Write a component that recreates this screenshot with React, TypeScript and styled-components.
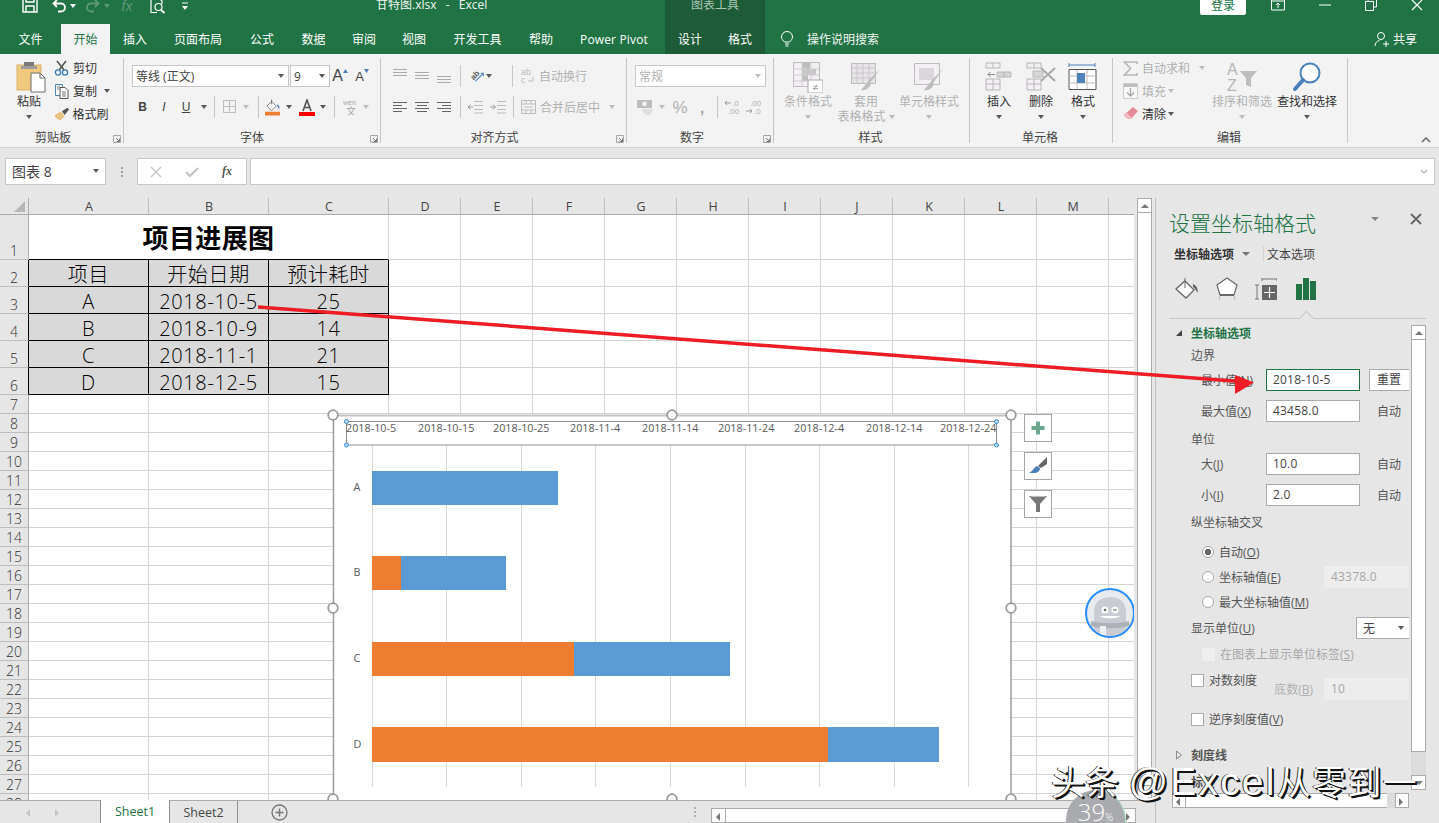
import React from "react";
import styled, { createGlobalStyle } from "styled-components";

const FONT = `"Open Sans","Noto Sans CJK SC",sans-serif`;
const GREEN = "#217346";

const Global = createGlobalStyle`
  html,body{margin:0;padding:0;overflow:hidden;background:#e6e6e6;}
  *{box-sizing:border-box;}
  #root{width:1439px;height:823px;}
`;

const Page = styled.div`
  position:relative;width:1439px;height:823px;overflow:hidden;display:flex;flex-direction:column;
  font-family:${FONT};font-size:12px;color:#444;background:#e6e6e6;
`;

/* shared slots */
const Slot = styled.span<{ $w: number; $ml?: number }>`
  display:inline-flex;align-items:center;justify-content:center;flex:none;
  width:${p => p.$w}px;margin-left:${p => p.$ml ?? 0}px;
`;
const Caret = styled.i<{ $dim?: boolean; $c?: string }>`
  display:block;width:0;height:0;border-left:3.5px solid transparent;border-right:3.5px solid transparent;
  border-top:4px solid ${p => p.$c ?? (p.$dim ? "#bdbdbd" : "#595959")};
`;

/* title bar */
const TitleBar = styled.div`
  display:flex;height:24px;background:${GREEN};color:#fff;align-items:flex-start;flex:none;
`;
const TitleIconSlot = styled(Slot)`height:14px;margin-top:-1px;overflow:visible;`;
const TitleText = styled.div`
  flex:none;width:289px;margin-left:187px;line-height:12px;margin-top:-1px;white-space:pre;font-size:12px;color:#f2f7f4;word-spacing:1.5px;
`;
const ContextHead = styled.div`
  flex:none;width:100px;height:24px;background:#1e5c39;text-align:center;line-height:12px;color:#a9c7b6;
  & > span{position:relative;top:-1px;}
`;
const Login = styled.div`
  flex:none;width:46px;height:15px;margin-left:435px;background:#fff;color:${GREEN};text-align:center;line-height:11px;border-radius:0 0 2px 2px;
`;
const WinBtn = styled(Slot)`height:12px;margin-top:-1px;`;

/* tabs */
const TabBar = styled.div`
  display:flex;height:30px;background:${GREEN};flex:none;color:#fff;align-items:stretch;
`;
const Tab = styled.div<{ $w: number; $active?: boolean; $ctx?: boolean; $ls?: number }>`
  flex:none;width:${p => p.$w}px;display:flex;align-items:center;justify-content:center;font-size:12px;
  letter-spacing:${p => p.$ls ?? 0}px;
  background:${p => (p.$active ? "#f3f3f3" : p.$ctx ? "#1e5c39" : "transparent")};
  color:${p => (p.$active ? GREEN : "#fff")};
`;
const TabGap = styled.div<{ $w: number }>`flex:none;width:${p => p.$w}px;`;
const SearchHint = styled.div`display:flex;align-items:center;margin-left:15px;color:#f0f6f2;`;
const ShareBox = styled.div`display:flex;align-items:center;margin-left:auto;margin-right:22px;gap:3px;`;

/* ribbon */
const Ribbon = styled.div`
  position:relative;display:flex;height:94px;background:#f3f3f3;border-bottom:1px solid #d2d2d2;flex:none;padding-top:4px;
`;
const Group = styled.div<{ $w: number }>`
  position:relative;flex:none;width:${p => p.$w}px;height:85px;border-right:1px solid #c6c6c6;display:flex;flex-direction:column;
`;
const GroupBody = styled.div`flex:1;display:flex;min-height:0;`;
const GroupLabel = styled.div<{ $pr?: number }>`
  flex:none;height:14px;line-height:14px;text-align:center;color:#444;font-size:12px;
  padding-right:${p => p.$pr ?? 0}px;position:relative;top:1.5px;
`;
const Launcher = styled.svg`position:absolute;right:2px;bottom:0;width:8px;height:8px;`;
const BigBtn = styled.div<{ $w: number; $ml?: number; $dim?: boolean }>`
  flex:none;width:${p => p.$w}px;margin-left:${p => p.$ml ?? 0}px;padding-top:4px;display:flex;flex-direction:column;align-items:center;
  color:${p => (p.$dim ? "#b1b1b1" : "#333")};white-space:nowrap;
`;
const BigIcon = styled.div<{ $lead?: number }>`
  height:30px;width:32px;flex:none;margin-bottom:2px;margin-left:${p => p.$lead ?? 0}px;display:flex;align-items:center;justify-content:center;
`;
const BigText = styled.div`height:15px;line-height:15px;display:flex;align-items:center;gap:3px;`;
const BigCaret = styled.div`height:15px;display:flex;align-items:center;`;
const SmallCol = styled.div<{ $ml: number; $w?: number }>`
  flex:none;margin-left:${p => p.$ml}px;${p => (p.$w ? `width:${p.$w}px;` : "")}display:flex;flex-direction:column;gap:3px;
`;
const SmallRow = styled.div<{ $dim?: boolean }>`
  height:20px;display:flex;align-items:center;white-space:nowrap;color:${p => (p.$dim ? "#b1b1b1" : "#333")};
`;
const Stack = styled.div`flex:none;display:flex;flex-direction:column;gap:9px;padding-top:7px;`;
const ToolRow = styled.div`display:flex;align-items:center;height:22px;white-space:nowrap;`;
const Combo = styled.div<{ $w: number; $ml?: number; $dim?: boolean }>`
  flex:none;width:${p => p.$w}px;height:22px;margin-left:${p => p.$ml ?? 0}px;background:#fff;border:1px solid #c6c6c6;
  display:flex;align-items:center;justify-content:space-between;padding:0 4px 0 3px;color:${p => (p.$dim ? "#b1b1b1" : "#444")};
`;
const RSep = styled.i<{ $ml?: number }>`
  display:block;flex:none;width:1px;height:22px;background:#c6c6c6;margin-left:${p => p.$ml ?? 0}px;
`;
const Dim = styled.span<{ $ml?: number }>`color:#b1b1b1;flex:none;margin-left:${p => p.$ml ?? 0}px;`;
const FontLetter = styled.span<{ $b?: boolean; $i?: boolean; $u?: boolean; $size?: number; $c?: string }>`
  font-family:"Liberation Sans",sans-serif;font-size:${p => p.$size ?? 12}px;line-height:1;color:${p => p.$c ?? "#444"};
  font-weight:${p => (p.$b ? 700 : 400)};font-style:${p => (p.$i ? "italic" : "normal")};
  text-decoration:${p => (p.$u ? "underline" : "none")};
`;
const Collapse = styled.svg`position:absolute;right:8px;bottom:4px;width:10px;height:6px;`;

/* formula bar */
const FormulaBar = styled.div`
  flex:none;height:42px;padding-top:10px;display:flex;background:#e6e6e6;align-items:flex-start;
`;
const NameBox = styled.div`
  flex:none;width:101px;height:27px;margin-left:5px;background:#fff;border:1px solid #c6c6c6;display:flex;align-items:center;justify-content:space-between;padding:0 6px 2px;font-size:14px;color:#444;
`;
const Grip = styled.svg`flex:none;width:4px;height:12px;margin:8px 13px 0 14px;`;
const FxBox = styled.div`
  flex:none;width:110px;height:27px;background:#fff;border:1px solid #c6c6c6;display:flex;align-items:center;
`;
const FormulaInput = styled.div`
  flex:none;width:1185px;height:27px;margin-left:3px;background:#fff;border:1px solid #c6c6c6;display:flex;align-items:center;justify-content:flex-end;padding-right:6px;
`;
const FxText = styled.span`font:italic 700 12px "Liberation Serif",serif;color:#555;`;

/* main */
const Main = styled.div`flex:1;display:flex;min-height:0;`;
const LeftCol = styled.div`flex:none;width:1155px;display:flex;flex-direction:column;padding-top:8px;`;
const SheetRow = styled.div`flex:1;display:flex;min-height:0;`;
const Sheet = styled.div`position:relative;flex:none;width:1134px;overflow:hidden;background:#fff;`;
const Grid = styled.div`
  display:grid;
  grid-template-columns:29px 120px 120px 120px repeat(10,72px) 26px;
  grid-template-rows:17px 45px repeat(5,27px) repeat(22,19px);
`;
const Corner = styled.div`background:#e6e6e6;border-right:1px solid #ababab;border-bottom:1px solid #ababab;position:relative;
  &::after{content:"";position:absolute;right:3px;bottom:2px;border-style:solid;border-width:0 0 11px 11px;border-color:transparent transparent #b7b7b7 transparent;}
`;
const ColHead = styled.div`
  background:#e6e6e6;border-right:1px solid #bdbdbd;border-bottom:1px solid #ababab;display:flex;align-items:center;justify-content:center;font-size:12.5px;color:#444;line-height:1;padding:2px 0 0 1px;
`;
const RowHead = styled.div<{ $dark?: boolean }>`
  background:#e6e6e6;border-right:1px solid ${p => (p.$dark ? "#000" : "#ababab")};border-bottom:1px solid #bdbdbd;display:flex;align-items:flex-end;justify-content:center;font-size:14px;line-height:17px;color:#333;font-weight:300;
`;
const Cell = styled.div<{ $r?: boolean; $b?: boolean; $fill?: boolean }>`
  background:${p => (p.$fill ? "#d9d9d9" : "#fff")};
  border-right:1px solid ${p => (p.$r ? "#000" : "#d4d4d4")};
  border-bottom:1px solid ${p => (p.$b ? "#000" : "#d4d4d4")};
  display:flex;align-items:center;justify-content:center;font-size:20px;font-weight:300;line-height:1;color:#000;padding-top:4px;letter-spacing:.65px;
`;
const TitleCell = styled(Cell)`grid-column:span 3;font-size:26px;font-weight:700;color:#000;letter-spacing:.4px;padding-top:2px;`;

const ChartSvg = styled.svg`position:absolute;left:325px;top:207px;width:700px;height:410px;overflow:visible;`;
const ChartTools = styled.div`position:absolute;left:1024px;top:216px;display:flex;flex-direction:column;gap:10px;`;
const ChartTool = styled.div`width:28px;height:28px;background:#fff;border:1px solid #a6a6a6;display:flex;align-items:center;justify-content:center;`;
const Mascot = styled.div`
  position:absolute;left:1085px;top:390px;width:50px;height:50px;border-radius:50%;border:2px solid #2a8cff;background:#e8eaee;overflow:hidden;
`;

const VScroll = styled.div`
  flex:none;width:15px;margin-left:3px;background:#fff;border:1px solid #ababab;display:flex;flex-direction:column;justify-content:space-between;
`;
const ScrollBtn = styled.div<{ $w?: number; $h?: number; $ml?: number }>`
  flex:none;${p => (p.$w ? `width:${p.$w}px;` : "")}height:${p => p.$h ?? 15}px;margin-left:${p => p.$ml ?? 0}px;background:#fff;border:1px solid #ababab;display:flex;align-items:center;justify-content:center;
`;
const VScrollBtn = styled(ScrollBtn)`margin:-1px;width:15px;`;

/* sheet tabs */
const SheetTabs = styled.div`
  flex:none;height:23px;border-top:1px solid #ababab;display:flex;align-items:stretch;background:#e6e6e6;
`;
const SheetTab = styled.div<{ $active?: boolean; $w: number; $ml?: number }>`
  flex:none;width:${p => p.$w}px;margin-left:${p => p.$ml ?? 0}px;display:flex;align-items:center;justify-content:center;
  background:${p => (p.$active ? "#fff" : "transparent")};color:${p => (p.$active ? GREEN : "#444")};
  border-right:1px solid #8f8f8f;${p => (p.$active ? "border-left:1px solid #8f8f8f;margin-top:-1px;" : "")}
  font-size:12.5px;
`;
const HScrollMain = styled.div`flex:none;display:flex;margin:7px 0 0 14px;height:15px;`;
const ScrollThumb = styled.div<{ $w: number }>`flex:none;width:${p => p.$w}px;background:#fff;border-top:1px solid #ababab;border-bottom:1px solid #ababab;`;

/* panel */
const Panel = styled.div`
  flex:none;width:284px;margin-top:8px;border-left:1px solid #bdbdbd;background:#e6e6e6;display:flex;flex-direction:column;
`;
const PanelTitleRow = styled.div`display:flex;align-items:flex-start;height:24px;margin-top:14px;flex:none;`;
const PanelTitle = styled.div`flex:none;margin-left:13px;width:147px;font-size:21px;line-height:24px;color:${GREEN};white-space:nowrap;font-weight:300;position:relative;top:-1px;`;
const PanelAction = styled(Slot)`height:12px;margin-top:1px;`;
const PanelTabs = styled.div`display:flex;align-items:center;height:16px;margin-top:10px;flex:none;`;
const PanelTabBold = styled.div`flex:none;margin-left:18px;font-weight:700;color:#333;`;
const PanelSep = styled.i`display:block;flex:none;width:1px;height:16px;background:#d4d4d4;margin-left:12px;`;
const PanelTab = styled.div`flex:none;margin-left:3px;color:#444;`;
const PanelIcons = styled.div`display:flex;align-items:center;height:26px;margin-top:14px;flex:none;`;
const Divider = styled.div`
  position:relative;flex:none;margin:16px 0 0 13px;width:257px;height:1px;background:#c6c6c6;
  &::after{content:"";position:absolute;left:132px;top:-5px;width:10px;height:10px;background:#e6e6e6;border-left:1px solid #c6c6c6;border-top:1px solid #c6c6c6;transform:rotate(45deg);}
`;
const PanelBody = styled.div`flex:none;height:468px;margin-top:3px;display:flex;`;
const PanelContent = styled.div`flex:none;width:253px;overflow:hidden;display:flex;flex-direction:column;`;
const PRow = styled.div<{ $mt?: number; $pl: number; $dim?: boolean; $b?: boolean; $c?: string }>`
  flex:none;height:22px;margin-top:${p => p.$mt ?? 0}px;padding-left:${p => p.$pl}px;display:flex;align-items:center;white-space:nowrap;
  color:${p => p.$c ?? (p.$dim ? "#a6a6a6" : "#555")};font-weight:${p => (p.$b ? 700 : 400)};
`;
const PLabel = styled.div<{ $w?: number }>`flex:none;${p => (p.$w ? `width:${p.$w}px;` : "")}`;
const PInput = styled.div<{ $w?: number; $active?: boolean; $ml?: number; $off?: boolean }>`
  flex:none;width:${p => p.$w ?? 94}px;height:22px;margin-left:${p => p.$ml ?? 0}px;line-height:20px;padding-left:6px;letter-spacing:.2px;
  background:${p => (p.$off ? "#ededed" : "#fff")};color:${p => (p.$off ? "#a6a6a6" : "#444")};
  border:1px solid ${p => (p.$active ? GREEN : p.$off ? "#ededed" : "#ababab")};
`;
const PButton = styled.div`
  flex:none;width:42px;height:22px;margin-left:9px;background:#fff;border:1px solid #ababab;line-height:20px;text-align:center;padding-right:2px;color:#444;
`;
const PAuto = styled.div`flex:none;width:42px;margin-left:9px;text-align:center;padding-right:2px;color:#555;`;
const Radio = styled.i<{ $on?: boolean }>`
  display:block;flex:none;width:12px;height:12px;border-radius:50%;border:1px solid #ababab;background:${p => (p.$on ? "radial-gradient(circle,#666 0 3px,#fff 3.5px)" : "#fff")};margin-right:5px;
`;
const Check = styled.i<{ $off?: boolean }>`
  display:block;flex:none;width:13px;height:13px;border:1px solid ${p => (p.$off ? "#efefef" : "#ababab")};background:${p => (p.$off ? "#efefef" : "#fff")};margin-right:5px;
`;
const PSelect = styled.div`
  flex:none;width:53px;height:22px;margin-left:auto;background:#fff;border:1px solid #ababab;border-right:none;display:flex;align-items:center;justify-content:space-between;padding:0 5px 0 6px;color:#444;
`;
const RightGroup = styled.div<{ $mt?: number }>`flex:none;margin-left:auto;display:flex;align-items:center;margin-top:${p => p.$mt ?? 0}px;`;
const Tri = styled.svg`flex:none;width:8px;height:10px;margin-right:8px;`;
const InnerScroll = styled.div`
  flex:none;width:15px;margin:3px 0 0 2px;height:465px;display:flex;flex-direction:column;
`;
const InnerThumb = styled.div`flex:none;height:412px;background:#fff;border:1px solid #ababab;border-top:none;`;
const InnerTrack = styled.div`flex:1;background:#dcdcdc;`;
const PanelHScroll = styled.div`flex:none;display:flex;margin:3px 0 0 16px;height:15px;width:237px;`;
const HTrack = styled.div`flex:none;width:8px;background:#dcdcdc;`;

/* overlays */
const ArrowSvg = styled.svg`position:absolute;left:0;top:0;width:1439px;height:823px;pointer-events:none;`;
const Watermark = styled.div`
  position:absolute;left:1051px;top:758px;font-size:34px;line-height:48px;color:#fff;white-space:pre;pointer-events:none;
  font-family:"Liberation Sans","Noto Sans CJK SC",sans-serif;text-shadow:2px 2px 0 #111,1px 1px 0 #111,-1px 0 0 #333;
`;
const WatermarkLatin = styled.span`font-size:39px;letter-spacing:2.2px;`;
const WatermarkTail = styled.span`letter-spacing:1.3px;`;
const Progress = styled.div`
  position:absolute;left:1066px;top:790px;width:60px;height:60px;border-radius:50%;background:#a9abae;border-right:1.5px solid #a8e6c4;
  color:#fff;text-align:center;font-size:24px;line-height:44px;font-weight:300;
  & small{font-size:10px;}
`;

/* ---------- icons ---------- */
const Launch = () => (
  <Launcher viewBox="0 0 8 8"><path d="M.5 .5h7v7h-7z" fill="none" stroke="#a6a6a6" /><path d="M3 3l3.500 3.500M6.500 3.500v3h-3" fill="none" stroke="#777" /></Launcher>
);
const Paste = () => (
  <svg width="30" height="32" viewBox="0 0 30 32">
    <rect x="1" y="4" width="24" height="25" fill="#f0c97f" stroke="#dcb26a" />
    <rect x="8" y="1" width="10" height="6" fill="#7b7b7b" /><rect x="5" y="5" width="16" height="3" fill="#9c9c9c" />
    <path d="M15 12h9l5 5v14H15z" fill="#fff" stroke="#6e6e6e" /><path d="M24 12v5h5" fill="none" stroke="#6e6e6e" />
  </svg>
);
const Scissors = () => (
  <svg width="16" height="16" viewBox="0 0 16 16" fill="none">
    <path d="M3 1l7 9M12 1L5 10" stroke="#555" strokeWidth="1.600" />
    <circle cx="4" cy="12.500" r="2.600" stroke="#3a7ab8" strokeWidth="1.300" /><circle cx="11" cy="12.500" r="2.600" stroke="#3a7ab8" strokeWidth="1.300" />
  </svg>
);
const CopyI = () => (
  <svg width="16" height="16" viewBox="0 0 16 16" fill="none">
    <path d="M1.500 1.500h7v11h-7z" fill="#fff" stroke="#4f86b8" /><path d="M6 4.500h5l3 3v8H6z" fill="#fff" stroke="#555" />
    <path d="M8 9h4M8 11h4M8 13h4M3 4h3M3 6h2" stroke="#777" />
  </svg>
);
const Brush = () => (
  <svg width="18" height="14" viewBox="0 0 18 14"><path d="M1 8l7-4 4 6-5 4-3-1-3-3z" fill="#e9c483" /><path d="M9 4l6-4 2 2-5 6z" fill="#555" /></svg>
);
const BorderI = () => (
  <svg width="14" height="14" viewBox="0 0 14 14" fill="none" stroke="#bdbdbd"><path d="M.5.5h12v12H.5zM6.500.5v12M.5 6.500h12" /></svg>
);
const FillI = () => (
  <svg width="17" height="17" viewBox="0 0 17 17"><path d="M2 7l5-5 5 5-5 5z" fill="#fff" stroke="#777" /><path d="M7 0v5" stroke="#777" /><path d="M13 5c2 1 3 3 2 5l-2-3z" fill="#4f81bd" /><rect y="13" width="16" height="4" fill="#ed7d31" /></svg>
);
const ColorA = () => (
  <svg width="16" height="17" viewBox="0 0 16 17"><path d="M4 12L8 1l4 11M5.500 8.500h5" fill="none" stroke="#555" strokeWidth="1.600" /><rect y="13" width="16" height="4" fill="#ff0000" /></svg>
);
const Lines = ({ rows, c = "#666" }: { rows: [number, number, number][]; c?: string }) => (
  <svg width="16" height="16" viewBox="0 0 16 16" stroke={c} fill="none">
    {rows.map(([y, x, w], i) => <path key={i} d={`M${x} ${y}.5h${w}`} />)}
  </svg>
);
const OrientI = () => (
  <svg width="18" height="16" viewBox="0 0 18 16">
    <text x="1" y="10" fontSize="9" fontWeight="700" fill="#666" fontFamily="Liberation Sans" transform="rotate(-45 6 8)">ab</text>
    <path d="M6 14L15 5M12 5h3v3" fill="none" stroke="#4f81bd" strokeWidth="1.200" />
  </svg>
);
const IndentI = ({ flip }: { flip?: boolean }) => (
  <svg width="16" height="14" viewBox="0 0 16 14" fill="none" stroke="#bdbdbd">
    <path d="M7 1.500h9M7 5.500h9M7 9.500h9M7 13h9" />{flip ? <path d="M6 7H1M3.500 4.500L1 7l2.500 2.500" stroke="#999" /> : <path d="M0 7h5M3 4.500L5.500 7 3 9.500" stroke="#999" />}
  </svg>
);
const WrapI = () => (
  <svg width="14" height="16" viewBox="0 0 14 16"><text x="0" y="7" fontSize="9" fill="#bdbdbd" fontFamily="Liberation Sans">ab</text><text x="0" y="15" fontSize="9" fill="#bdbdbd" fontFamily="Liberation Sans">c</text><path d="M7 13h5V9" fill="none" stroke="#bdbdbd" /></svg>
);
const MergeI = () => (
  <svg width="15" height="14" viewBox="0 0 15 14" fill="none" stroke="#bdbdbd"><path d="M.5.5h14v13H.5zM.5 4h14M.5 10h14M5 .5V4M10 .5V4M5 10v3.500M10 10v3.500M3 7h9" /></svg>
);
const Currency = () => (
  <svg width="17" height="17" viewBox="0 0 17 17"><rect y="1" width="15" height="8" fill="#bdbdbd" /><circle cx="7.500" cy="5" r="2.400" fill="#f3f3f3" /><path d="M5 11h11M6 13h9M8 15h6" stroke="#ccc" /></svg>
);
const DecI = ({ inc }: { inc?: boolean }) => (
  <svg width="20" height="16" viewBox="0 0 20 16">
    <text x={inc ? 5 : 9} y="7" fontSize="8" fill="#b1b1b1" fontFamily="Liberation Sans">{inc ? ".00" : ".0"}</text>
    <text x={inc ? 9 : 5} y="15" fontSize="8" fill="#b1b1b1" fontFamily="Liberation Sans">{inc ? ".0" : ".00"}</text>
    {inc ? <path d="M1 12h6M5 10l2 2-2 2" fill="none" stroke="#999" /> : <path d="M8 4H2M4 2L2 4l2 2" fill="none" stroke="#999" />}
  </svg>
);
const CondI = () => (
  <svg width="30" height="31" viewBox="0 0 30 31">
    <path d="M.5.5h26v24H.5z" fill="#f4eff4" stroke="#bdbdbd" /><rect x="9" y="1" width="8" height="6" fill="#bdbdbd" /><rect x="9" y="7" width="14" height="6" fill="#c6c6c6" /><rect x="9" y="13" width="6" height="6" fill="#bdbdbd" />
    <path d="M9 .5v24M18 .5v24M.5 7h26M.5 13h26M.5 19h26" stroke="#cfcfcf" fill="none" />
    <rect x="15" y="18" width="15" height="13" fill="#fff" stroke="#aaa" /><text x="19" y="29" fontSize="11" fill="#999">≠</text>
  </svg>
);
const TableI = () => (
  <svg width="30" height="29" viewBox="0 0 30 29">
    <path d="M.5.5h24v20H.5z" fill="#e8e3e8" stroke="#bdbdbd" /><path d="M6 .5v20M12 .5v20M18 .5v20M.5 5h24M.5 10h24M.5 15h24" stroke="#c8c8c8" />
    <path d="M29 6L19 20l-2-2z" fill="#bdbdbd" /><path d="M18 18c-3 2-5 6-8 9 4 1 8-1 10-6z" fill="#bdbdbd" />
  </svg>
);
const StyleI = () => (
  <svg width="30" height="29" viewBox="0 0 30 29">
    <path d="M.5.5h25v21H.5z" fill="#f4eff4" stroke="#bdbdbd" /><rect x="5" y="5" width="15" height="12" fill="#dad6da" /><path d="M29 6L19 20l-2-2z" fill="#bdbdbd" /><path d="M18 18c-3 2-5 6-8 9 4 1 8-1 10-6z" fill="#bdbdbd" />
  </svg>
);
const InsertI = () => (
  <svg width="28" height="30" viewBox="0 0 28 30" fill="none" stroke="#b7b7b7">
    <path d="M1 1h14v5H1zM8 1v5M1 17h14v11H1zM8 17v11M1 22h14" fill="#f4eff4" /><path d="M12 10h14v5H12zM19 10v5" fill="#d6d6d6" /><path d="M3 12.500h7M5.500 10L3 12.500 5.500 15" stroke="#888" />
  </svg>
);
const DeleteI = () => (
  <svg width="30" height="30" viewBox="0 0 30 30" fill="none" stroke="#b7b7b7">
    <path d="M1 1h14v5H1zM8 1v5M1 17h14v11H1zM8 17v11M1 22h14" fill="#f4eff4" /><rect x="7" y="9" width="10" height="6" fill="#d6d6d6" /><path d="M15 6l14 13M29 6L15 19" stroke="#aaa" strokeWidth="2" />
  </svg>
);
const FormatI = () => (
  <svg width="30" height="31" viewBox="0 0 30 31" fill="none">
    <path d="M1 3h26M1 1v4M27 1v4" stroke="#4f81bd" /><path d="M1 7.500h27v20H1z" fill="#fff" stroke="#555" /><path d="M9 8v19M19 8v19M1 14h27M1 21h27" stroke="#bdbdbd" />
    <rect x="9" y="11" width="8" height="10" fill="#4f81bd" />
  </svg>
);
const Sigma = () => (<svg width="15" height="15" viewBox="0 0 15 15" fill="none"><path d="M14 3V1H1.500l6 6.500-6 6.500H14v-2" stroke="#b7b7b7" strokeWidth="1.700" /></svg>);
const FillDown = () => (<svg width="15" height="16" viewBox="0 0 15 16" fill="none"><path d="M.5.5h14v15H.5z" stroke="#ccc" fill="#f9f9f9" /><rect x="1" y="1" width="13" height="3" fill="#bdbdbd" /><path d="M7.500 5v8M4 9.500l3.500 3.500 3.500-3.500" stroke="#aaa" strokeWidth="1.400" /></svg>);
const Eraser = () => (<svg width="14" height="14" viewBox="0 0 14 14"><path d="M9 0l5 4-7 8-5-1-2-3z" fill="#e88a9a" /><path d="M0 8l2 3 5 1 1-1-5-5z" fill="#f2b9c4" /></svg>);
const SortI = () => (
  <svg width="31" height="30" viewBox="0 0 31 30"><text x="0" y="13" fontSize="16" fontFamily="Liberation Sans" fill="#b7b7b7">A</text><text x="0" y="29" fontSize="16" fontFamily="Liberation Sans" fill="#b7b7b7">Z</text><path d="M13 9h17l-6 7v9l-5-2v-7z" fill="#bdbdbd" /></svg>
);
const Find = () => (
  <svg width="30" height="30" viewBox="0 0 30 30" fill="none"><circle cx="18" cy="11" r="9.500" stroke="#4a80bb" strokeWidth="2" fill="#fff" /><path d="M11 18L3 27" stroke="#4a80bb" strokeWidth="4" strokeLinecap="round" /></svg>
);
const Bulb = () => (
  <svg width="14" height="16" viewBox="0 0 14 16" fill="none" stroke="#fff"><path d="M4.500 11C3 9.500 1.500 8 1.500 6a5.500 5.500 0 0111 0c0 2-1.500 3.500-3 5zM5 13h4M5.500 15h3" /></svg>
);
const Person = () => (
  <svg width="16" height="16" viewBox="0 0 16 16" fill="none" stroke="#fff"><circle cx="7" cy="5" r="3.500" /><path d="M1 15c0-3 2-5 4.500-5.500M9 13h6M12 10v6" /></svg>
);
const X = ({ c, w = 1.4 }: { c: string; w?: number }) => (<svg width="12" height="12" viewBox="0 0 12 12"><path d="M1 1l10 10M11 1L1 11" stroke={c} strokeWidth={w} /></svg>);
const Arr = ({ d, c = "#777" }: { d: "u" | "d" | "l" | "r"; c?: string }) => {
  const p = { u: "M1 6h8L5 2z", d: "M1 2h8L5 6z", l: "M6 1v8L2 5z", r: "M2 1v8l4-4z" }[d];
  return <svg width="10" height="10" viewBox="0 0 10 8" overflow="visible"><path d={p} fill={c} /></svg>;
};
const ALIGN_L: [number, number, number][] = [[3, 1, 14], [6, 1, 9], [9, 1, 14], [12, 1, 9]];
const ALIGN_C: [number, number, number][] = [[3, 1, 14], [6, 3, 10], [9, 1, 14], [12, 3, 10]];
const ALIGN_R: [number, number, number][] = [[3, 1, 14], [6, 6, 9], [9, 1, 14], [12, 6, 9]];
const top3 = (y: number): [number, number, number][] => [[y, 1, 14], [y + 3, 1, 14], [y + 6, 1, 14]];

/* ---------- data ---------- */
const COLS = ["A", "B", "C", "D", "E", "F", "G", "H", "I", "J", "K", "L", "M", ""];
const TABLE: Record<number, string[]> = {
  2: ["项目", "开始日期", "预计耗时"],
  3: ["A", "2018-10-5", "25"],
  4: ["B", "2018-10-9", "14"],
  5: ["C", "2018-11-1", "21"],
  6: ["D", "2018-12-5", "15"],
};
const ROWS = Array.from({ length: 28 }, (_, i) => i + 1);
const AXIS: [number, string][] = [[346, "2018-10-5"], [418, "2018-10-15"], [493, "2018-10-25"], [570, "2018-11-4"], [642, "2018-11-14"], [718, "2018-11-24"], [794, "2018-12-4"], [866, "2018-12-14"], [940, "2018-12-24"]];
const GRID_X = [372, 446, 521, 595, 670, 745, 819, 894, 968];
const BARS = [
  { n: "A", y: 471, h: 34, o: 0, b: 186, ly: 491 },
  { n: "B", y: 556, h: 34, o: 29, b: 105, ly: 576 },
  { n: "C", y: 642, h: 34, o: 202, b: 156, ly: 662 },
  { n: "D", y: 727, h: 35, o: 456, b: 111, ly: 748 },
];
const HANDLES = [[333, 415], [672, 415], [1011, 415], [333, 608], [1011, 608], [333, 799], [672, 799], [1011, 799]];

const SheetGrid = () => (
  <Grid>
    <Corner />
    {COLS.map((c, i) => <ColHead key={i}>{c}</ColHead>)}
    {ROWS.map(r => (
      <React.Fragment key={r}>
        <RowHead $dark={r >= 2 && r <= 6}>{r}</RowHead>
        {r === 1 && <TitleCell $b>项目进展图</TitleCell>}
        {COLS.map((_, i) => {
          if (r === 1 && i < 3) return null;
          const inTable = !!TABLE[r] && i < 3;
          return (
            <Cell key={i} $fill={inTable} $r={inTable} $b={inTable}>
              {inTable ? TABLE[r][i] : ""}
            </Cell>
          );
        })}
      </React.Fragment>
    ))}
  </Grid>
);

const Chart = () => (
  <ChartSvg viewBox="325 405 700 410">
    <rect x="334" y="415" width="677" height="400" fill="#fff" />
    <path d="M333.500 415V815M1011 415V815" stroke="#9c9c9c" strokeWidth="1.500" fill="none" />
    <path d="M334 415.500H1011" stroke="#c4c4c4" strokeWidth="2" />
    {GRID_X.map(x => <path key={x} d={`M${x}.5 445V787`} stroke="#d9d9d9" />)}
    {BARS.map(b => (
      <g key={b.n}>
        {b.o > 0 && <rect x="372" y={b.y} width={b.o} height={b.h} fill="#ed7d31" />}
        <rect x={372 + b.o} y={b.y} width={b.b} height={b.h} fill="#5b9bd5" />
        <text x="353.500" y={b.ly} fontSize="10.800" fill="#595959" fontFamily="Open Sans">{b.n}</text>
      </g>
    ))}
    <rect x="346.500" y="421.500" width="650" height="23.500" fill="none" stroke="#8f8f8f" />
    {AXIS.map(([x, t]) => <text key={t} x={x} y="432" fontSize="10.800" fill="#595959" fontFamily="Open Sans">{t}</text>)}
    {[[346.500, 421.500], [996.500, 421.500], [346.500, 445], [996.500, 445]].map(([x, y], i) => (
      <circle key={i} cx={x} cy={y} r="2" fill="#bcdcf8" stroke="#2e8fe8" />
    ))}
    {HANDLES.map(([x, y], i) => <circle key={i} cx={x} cy={y} r="4.800" fill="#fff" stroke="#9a9a9a" strokeWidth="1.800" />)}
  </ChartSvg>
);

const RibbonBlock = () => (
  <Ribbon>
    <Group $w={124}>
      <GroupBody>
        <BigBtn $w={24} $ml={17}>
          <BigIcon $lead={4}><Paste /></BigIcon>
          <BigText>粘贴</BigText>
          <BigCaret><Caret /></BigCaret>
        </BigBtn>
        <SmallCol $ml={13}>
          <SmallRow><Slot $w={16}><Scissors /></Slot><Slot $w={26} $ml={2}>剪切</Slot></SmallRow>
          <SmallRow><Slot $w={16}><CopyI /></Slot><Slot $w={26} $ml={2}>复制</Slot><Slot $w={8} $ml={5}><Caret /></Slot></SmallRow>
          <SmallRow><Slot $w={16}><Brush /></Slot><Slot $w={37} $ml={2}>格式刷</Slot></SmallRow>
        </SmallCol>
      </GroupBody>
      <GroupLabel $pr={17}>剪贴板</GroupLabel>
      <Launch />
    </Group>
    <Group $w={257}>
      <GroupBody>
        <Stack>
          <ToolRow>
            <Combo $w={157} $ml={8}>等线 (正文)<Caret /></Combo>
            <Combo $w={40} $ml={1}>9<Caret /></Combo>
            <Slot $w={16} $ml={2}><FontLetter $size={16}>A</FontLetter><svg width="5" height="4" style={{ marginBottom: 10 }}><path d="M0 4h5L2.500 0z" fill="#4f81bd" /></svg></Slot>
            <Slot $w={16} $ml={6}><FontLetter $size={13}>A</FontLetter><svg width="5" height="4" style={{ marginBottom: 10 }}><path d="M0 0h5L2.500 4z" fill="#4f81bd" /></svg></Slot>
          </ToolRow>
          <ToolRow>
            <Slot $w={21} $ml={8}><FontLetter $b>B</FontLetter></Slot>
            <Slot $w={22}><FontLetter $i>I</FontLetter></Slot>
            <Slot $w={22}><FontLetter $u>U</FontLetter></Slot>
            <Slot $w={14}><Caret /></Slot>
            <RSep $ml={3} />
            <Slot $w={16} $ml={7}><BorderI /></Slot>
            <Slot $w={8} $ml={4}><Caret $dim /></Slot>
            <RSep $ml={8} />
            <Slot $w={16} $ml={6}><FillI /></Slot>
            <Slot $w={8} $ml={4}><Caret /></Slot>
            <Slot $w={16} $ml={6}><ColorA /></Slot>
            <Slot $w={8} $ml={4}><Caret /></Slot>
            <RSep $ml={7} />
            <Slot $w={16} $ml={8}>
              <svg width="16" height="16" viewBox="0 0 16 16"><text x="0" y="6" fontSize="7" fill="#a6a6a6" fontFamily="Liberation Sans">wén</text><text x="3" y="16" fontSize="10" fill="#a6a6a6" fontFamily="Noto Sans CJK SC">文</text></svg>
            </Slot>
            <Slot $w={8} $ml={3}><Caret $dim /></Slot>
          </ToolRow>
        </Stack>
      </GroupBody>
      <GroupLabel>字体</GroupLabel>
      <Launch />
    </Group>
    <Group $w={246}>
      <GroupBody>
        <Stack>
          <ToolRow>
            <Slot $w={16} $ml={11}><Lines c="#aaa" rows={top3(1)} /></Slot>
            <Slot $w={16} $ml={6}><Lines c="#aaa" rows={top3(4)} /></Slot>
            <Slot $w={16} $ml={6}><Lines c="#aaa" rows={top3(8)} /></Slot>
            <RSep $ml={8} />
            <Slot $w={16} $ml={9}><OrientI /></Slot>
            <Slot $w={8} $ml={-1}><Caret /></Slot>
            <RSep $ml={19} />
            <Slot $w={14} $ml={8}><WrapI /></Slot>
            <Dim $ml={4}>自动换行</Dim>
          </ToolRow>
          <ToolRow>
            <Slot $w={16} $ml={11}><Lines rows={ALIGN_L} /></Slot>
            <Slot $w={16} $ml={6}><Lines rows={ALIGN_C} /></Slot>
            <Slot $w={16} $ml={6}><Lines rows={ALIGN_R} /></Slot>
            <RSep $ml={8} />
            <Slot $w={16} $ml={6}><IndentI flip /></Slot>
            <Slot $w={16} $ml={7}><IndentI /></Slot>
            <RSep $ml={7} />
            <Slot $w={15} $ml={7}><MergeI /></Slot>
            <Dim $ml={4}>合并后居中</Dim>
            <Slot $w={8} $ml={8}><Caret $dim /></Slot>
          </ToolRow>
        </Stack>
      </GroupBody>
      <GroupLabel $pr={18}>对齐方式</GroupLabel>
      <Launch />
    </Group>
    <Group $w={147}>
      <GroupBody>
        <Stack>
          <ToolRow><Combo $w={131} $ml={8} $dim>常规<Caret $dim /></Combo></ToolRow>
          <ToolRow>
            <Slot $w={18} $ml={9}><Currency /></Slot>
            <Slot $w={8} $ml={4}><Caret $dim /></Slot>
            <Slot $w={16} $ml={6}><FontLetter $size={17} $c="#b1b1b1">%</FontLetter></Slot>
            <Slot $w={16} $ml={6}><FontLetter $size={15} $b $c="#a6a6a6">,</FontLetter></Slot>
            <RSep $ml={7} />
            <Slot $w={20} $ml={5}><DecI /></Slot>
            <Slot $w={20} $ml={2}><DecI inc /></Slot>
          </ToolRow>
        </Stack>
      </GroupBody>
      <GroupLabel $pr={16}>数字</GroupLabel>
      <Launch />
    </Group>
    <Group $w={196}>
      <GroupBody>
        <BigBtn $w={52} $ml={8} $dim><BigIcon><CondI /></BigIcon><BigText>条件格式</BigText><BigCaret><Caret $dim /></BigCaret></BigBtn>
        <BigBtn $w={56} $ml={4} $dim><BigIcon><TableI /></BigIcon><BigText>套用</BigText><BigText>表格格式<Caret $dim /></BigText></BigBtn>
        <BigBtn $w={62} $ml={4} $dim><BigIcon><StyleI /></BigIcon><BigText>单元格样式</BigText><BigCaret><Caret $dim /></BigCaret></BigBtn>
      </GroupBody>
      <GroupLabel $pr={2}>样式</GroupLabel>
    </Group>
    <Group $w={143}>
      <GroupBody>
        <BigBtn $w={42} $ml={8}><BigIcon><InsertI /></BigIcon><BigText>插入</BigText><BigCaret><Caret /></BigCaret></BigBtn>
        <BigBtn $w={42}><BigIcon><DeleteI /></BigIcon><BigText>删除</BigText><BigCaret><Caret /></BigCaret></BigBtn>
        <BigBtn $w={42}><BigIcon><FormatI /></BigIcon><BigText>格式</BigText><BigCaret><Caret /></BigCaret></BigBtn>
      </GroupBody>
      <GroupLabel $pr={2}>单元格</GroupLabel>
    </Group>
    <Group $w={235}>
      <GroupBody>
        <SmallCol $ml={10} $w={89}>
          <SmallRow $dim><Slot $w={15}><Sigma /></Slot><Slot $w={48} $ml={4}>自动求和</Slot><Slot $w={8} $ml={8}><Caret $dim /></Slot></SmallRow>
          <SmallRow $dim><Slot $w={15}><FillDown /></Slot><Slot $w={24} $ml={4}>填充</Slot><Slot $w={8} $ml={1}><Caret $dim /></Slot></SmallRow>
          <SmallRow><Slot $w={15}><Eraser /></Slot><Slot $w={24} $ml={4}>清除</Slot><Slot $w={8} $ml={1}><Caret /></Slot></SmallRow>
        </SmallCol>
        <BigBtn $w={60} $dim><BigIcon><SortI /></BigIcon><BigText>排序和筛选</BigText><BigCaret><Caret $dim /></BigCaret></BigBtn>
        <BigBtn $w={60} $ml={5}><BigIcon><Find /></BigIcon><BigText>查找和选择</BigText><BigCaret><Caret /></BigCaret></BigBtn>
      </GroupBody>
      <GroupLabel $pr={2}>编辑</GroupLabel>
    </Group>
    <Collapse viewBox="0 0 10 6"><path d="M1 5l4-4 4 4" fill="none" stroke="#666" strokeWidth="1.500" /></Collapse>
  </Ribbon>
);

const PanelBlock = () => (
  <Panel>
    <PanelTitleRow>
      <PanelTitle>设置坐标轴格式</PanelTitle>
      <PanelAction $w={10} $ml={54}><Arr d="d" c="#888" /></PanelAction>
      <PanelAction $w={12} $ml={30}><X c="#666" w={1.800} /></PanelAction>
    </PanelTitleRow>
    <PanelTabs>
      <PanelTabBold>坐标轴选项</PanelTabBold>
      <Slot $w={10} $ml={7}><Arr d="d" c="#777" /></Slot>
      <PanelSep />
      <PanelTab>文本选项</PanelTab>
    </PanelTabs>
    <PanelIcons>
      <Slot $w={24} $ml={19}>
        <svg width="24" height="24" viewBox="0 0 24 24"><path d="M1 12L10 4l9 9-8 8z" fill="#fff" stroke="#666" strokeWidth="1.300" /><path d="M10 1v10" stroke="#666" /><path d="M18 7c3 1 5 4 5 9-2-2-3-5-5-6z" fill="#666" /></svg>
      </Slot>
      <Slot $w={22} $ml={17}>
        <svg width="22" height="24" viewBox="0 0 22 24"><path d="M11 1l10 7-3 10H4L1 8z" fill="#fff" stroke="#666" strokeWidth="1.200" /><path d="M4 18l-1 5M18 18l1 5" stroke="#bbb" strokeWidth="1" /><path d="M4 18h14" stroke="#666" strokeWidth="2" /></svg>
      </Slot>
      <Slot $w={22} $ml={17}>
        <svg width="22" height="22" viewBox="0 0 22 22"><path d="M7 1h15M7 0v3M22 0v3M0 7h4M0 21h4M2 7v14" stroke="#777" fill="none" /><rect x="7" y="7" width="15" height="15" fill="#666" /><path d="M14.500 9v11M9 14.500h11" stroke="#fff" strokeWidth="1.200" /></svg>
      </Slot>
      <Slot $w={20} $ml={19}>
        <svg width="20" height="22" viewBox="0 0 20 22"><rect y="6" width="6" height="16" fill={GREEN} /><rect x="7" y="0" width="6" height="22" fill={GREEN} /><rect x="14" y="3" width="6" height="19" fill={GREEN} /></svg>
      </Slot>
    </PanelIcons>
    <Divider />
    <PanelBody>
      <PanelContent>
        <PRow $pl={19} $b $c={GREEN}><Tri viewBox="0 0 8 10"><path d="M1 8h6V2z" fill="#444" /></Tri><span>坐标轴选项</span></PRow>
        <PRow $pl={35}>边界</PRow>
        <PRow $mt={3} $pl={45}><PLabel $w={65}>最小值(<u>N</u>)</PLabel><PInput $active>2018-10-5</PInput><PButton>重置</PButton></PRow>
        <PRow $mt={9} $pl={45}><PLabel $w={65}>最大值(<u>X</u>)</PLabel><PInput>43458.0</PInput><PAuto>自动</PAuto></PRow>
        <PRow $mt={6} $pl={35}>单位</PRow>
        <PRow $mt={3} $pl={45}><PLabel $w={65}>大(<u>J</u>)</PLabel><PInput>10.0</PInput><PAuto>自动</PAuto></PRow>
        <PRow $mt={9} $pl={45}><PLabel $w={65}>小(<u>I</u>)</PLabel><PInput>2.0</PInput><PAuto>自动</PAuto></PRow>
        <PRow $mt={5} $pl={35}>纵坐标轴交叉</PRow>
        <PRow $mt={8} $pl={46}><Radio $on /><span>自动(<u>O</u>)</span></PRow>
        <PRow $mt={3} $pl={46}><Radio /><span>坐标轴值(<u>E</u>)</span><RightGroup><PInput $w={85} $off>43378.0</PInput></RightGroup></PRow>
        <PRow $mt={3} $pl={46}><Radio /><span>最大坐标轴值(<u>M</u>)</span></PRow>
        <PRow $mt={4} $pl={35}><span>显示单位(<u>U</u>)</span><PSelect>无<Caret /></PSelect></PRow>
        <PRow $mt={4} $pl={46} $dim><Check $off /><span>在图表上显示单位标签(<u>S</u>)</span></PRow>
        <PRow $mt={4} $pl={35}>
          <Check /><span>对数刻度</span>
          <RightGroup $mt={17}><Dim>底数(<u>B</u>)</Dim><PInput $w={85} $ml={11} $off>10</PInput></RightGroup>
        </PRow>
        <PRow $mt={17} $pl={35}><Check /><span>逆序刻度值(<u>V</u>)</span></PRow>
        <PRow $mt={14} $pl={19} $b><Tri viewBox="0 0 8 10"><path d="M1.500 1v8l5-4z" fill="none" stroke="#888" /></Tri><span>刻度线</span></PRow>
        <PRow $mt={5} $pl={19} $b><Tri viewBox="0 0 8 10"><path d="M1.500 1v8l5-4z" fill="none" stroke="#888" /></Tri><span>标签</span></PRow>
      </PanelContent>
      <InnerScroll>
        <ScrollBtn><Arr d="u" /></ScrollBtn>
        <InnerThumb />
        <InnerTrack />
        <ScrollBtn><Arr d="d" /></ScrollBtn>
      </InnerScroll>
    </PanelBody>
    <PanelHScroll>
      <ScrollBtn $w={14}><Arr d="l" /></ScrollBtn>
      <ScrollThumb $w={201} />
      <HTrack />
      <ScrollBtn $w={14}><Arr d="r" /></ScrollBtn>
    </PanelHScroll>
  </Panel>
);

export default function App() {
  return (
    <Page>
      <Global />
      <TitleBar>
        <TitleIconSlot $w={16} $ml={22}>
          <svg width="16" height="15" viewBox="0 0 16 15" fill="none" stroke="#fff" strokeWidth="1.400"><path d="M1 -1h14v14H1zM4 7h8v6H4z" /><path d="M4 -1v4h8v-4" /></svg>
        </TitleIconSlot>
        <TitleIconSlot $w={15} $ml={14}>
          <svg width="15" height="14" viewBox="0 0 15 14" fill="none" stroke="#fff" strokeWidth="1.800"><path d="M5 1L1.500 4.500 5 8M2 4.500h7a4 4 0 010 8H6" /></svg>
        </TitleIconSlot>
        <TitleIconSlot $w={8} $ml={2}><Caret $c="#fff" /></TitleIconSlot>
        <TitleIconSlot $w={15} $ml={8}>
          <svg width="15" height="14" viewBox="0 0 15 14" fill="none" stroke="#5f9878" strokeWidth="1.800"><path d="M10 1l3.500 3.500L10 8M13 4.500H6a4 4 0 000 8h3" /></svg>
        </TitleIconSlot>
        <TitleIconSlot $w={8} $ml={3}><Caret $c="#5f9878" /></TitleIconSlot>
        <TitleIconSlot $w={14} $ml={9}><FontLetter $i $size={14} $c="#5f9878">fx</FontLetter></TitleIconSlot>
        <TitleIconSlot $w={16} $ml={16}>
          <svg width="16" height="15" viewBox="0 0 16 15" fill="none" stroke="#fff" strokeWidth="1.200"><path d="M1 -1h8l3 3v3M7 13.500H1v-14" /><circle cx="8.500" cy="8" r="3.500" /><path d="M11 11l3.500 3" strokeWidth="1.800" /></svg>
        </TitleIconSlot>
        <TitleIconSlot $w={8} $ml={15}>
          <svg width="8" height="9" viewBox="0 0 8 9"><path d="M1 1h6" stroke="#fff" /><path d="M1 4h6L4 8z" fill="#fff" /></svg>
        </TitleIconSlot>
        <TitleText>甘特图.xlsx  -  Excel</TitleText>
        <ContextHead><span>图表工具</span></ContextHead>
        <Login>登录</Login>
        <WinBtn $w={46} $ml={9}>
          <svg width="14" height="12" viewBox="0 0 14 12" fill="none" stroke="#fff"><path d="M.5 -1h13v12H.5zM.5 2h13M7 9V4M5 6l2-2 2 2" /></svg>
        </WinBtn>
        <WinBtn $w={46} $ml={1}><svg width="12" height="2"><path d="M0 1h12" stroke="#fff" /></svg></WinBtn>
        <WinBtn $w={46}>
          <svg width="12" height="12" viewBox="0 0 12 12" fill="none" stroke="#fff"><path d="M.5 2.500h8v9h-8zM3 2.500V-1h8.500v9H8.500" /></svg>
        </WinBtn>
        <WinBtn $w={46}><X c="#fff" w={1.200} /></WinBtn>
      </TitleBar>
      <TabBar>
        <Tab $w={61}>文件</Tab>
        <Tab $w={49} $active>开始</Tab>
        <Tab $w={50}>插入</Tab>
        <Tab $w={76}>页面布局</Tab>
        <Tab $w={52}>公式</Tab>
        <Tab $w={51}>数据</Tab>
        <Tab $w={50}>审阅</Tab>
        <Tab $w={50}>视图</Tab>
        <Tab $w={77}>开发工具</Tab>
        <Tab $w={50}>帮助</Tab>
        <Tab $w={96} $ls={0.15}>Power Pivot</Tab>
        <TabGap $w={3} />
        <Tab $w={50} $ctx>设计</Tab>
        <Tab $w={50} $ctx>格式</Tab>
        <SearchHint><Bulb /><Slot $w={74} $ml={12}>操作说明搜索</Slot></SearchHint>
        <ShareBox><Person /><span>共享</span></ShareBox>
      </TabBar>
      <RibbonBlock />
      <FormulaBar>
        <NameBox><span>图表 8</span><Caret /></NameBox>
        <Grip viewBox="0 0 4 12"><path d="M2 1v2M2 5v2M2 9v2" stroke="#a0a0a0" strokeWidth="2" /></Grip>
        <FxBox>
          <Slot $w={14} $ml={11}><X c="#c4c4c4" w={1.400} /></Slot>
          <Slot $w={14} $ml={22}><svg width="14" height="12" viewBox="0 0 14 12"><path d="M1 6l4 4 8-8" fill="none" stroke="#c4c4c4" strokeWidth="2.200" /></svg></Slot>
          <Slot $w={14} $ml={21}><FxText>fx</FxText></Slot>
        </FxBox>
        <FormulaInput><svg width="8" height="6" viewBox="0 0 8 6"><path d="M1 1l3 3 3-3" fill="none" stroke="#bbb" strokeWidth="1.400" /></svg></FormulaInput>
      </FormulaBar>
      <Main>
        <LeftCol>
          <SheetRow>
            <Sheet>
              <SheetGrid />
              <Chart />
              <ChartTools>
                <ChartTool><svg width="16" height="16" viewBox="0 0 16 16"><path d="M8 1.500v13M1.500 8h13" stroke="#6aa68c" strokeWidth="4" /></svg></ChartTool>
                <ChartTool><svg width="20" height="20" viewBox="0 0 20 20"><path d="M19 1v7l-6 4-3-2z" fill="#666" /><path d="M9 10c-3 1-4 5-8 7h7c3-1 4-3 4-5z" fill="#4a80bb" /></svg></ChartTool>
                <ChartTool><svg width="20" height="18" viewBox="0 0 20 18"><path d="M1 1h18l-7 8v8H8V9z" fill="#777" /><path d="M3 1.500h14" stroke="#bbb" /></svg></ChartTool>
              </ChartTools>
              <Mascot>
                <svg width="46" height="46" viewBox="0 0 46 46">
                  <path d="M7 46V22C7 12 14 7 23 7s16 5 16 15v24z" fill="#c9ccd2" />
                  <circle cx="18" cy="20" r="3.500" fill="#fff" /><circle cx="28" cy="20" r="3.500" fill="#fff" /><circle cx="18" cy="20" r="1.300" fill="#666" /><path d="M26 20h4" stroke="#666" strokeWidth="1.200" />
                  <path d="M13 26h20c-2 3-18 3-20 0z" fill="#fff" />
                  <path d="M4 31c10 3 28 3 38 0v5c-10 3-28 3-38 0z" fill="#aeb2b8" /><rect x="13" y="36" width="6" height="9" fill="#eef0f2" />
                </svg>
              </Mascot>
            </Sheet>
            <VScroll>
              <VScrollBtn><Arr d="u" /></VScrollBtn>
              <VScrollBtn><Arr d="d" /></VScrollBtn>
            </VScroll>
          </SheetRow>
          <SheetTabs>
            <Slot $w={10} $ml={24}><Arr d="l" c="#c4c4c4" /></Slot>
            <Slot $w={10} $ml={19}><Arr d="r" c="#c4c4c4" /></Slot>
            <SheetTab $active $w={70} $ml={37}>Sheet1</SheetTab>
            <SheetTab $w={68}>Sheet2</SheetTab>
            <Slot $w={18} $ml={32}>
              <svg width="17" height="17" viewBox="0 0 17 17" fill="none"><circle cx="8.500" cy="8.500" r="7.500" stroke="#777" strokeWidth="1.300" /><path d="M8.500 4.500v8M4.500 8.500h8" stroke="#777" strokeWidth="1.500" /></svg>
            </Slot>
            <Slot $w={4} $ml={405}><svg width="4" height="12" viewBox="0 0 4 12"><path d="M2 1v2M2 5v2M2 9v2" stroke="#b0b0b0" strokeWidth="2" /></svg></Slot>
            <HScrollMain>
              <ScrollBtn $w={15}><Arr d="l" /></ScrollBtn>
              <ScrollThumb $w={396} />
              <ScrollBtn $w={14}><Arr d="r" /></ScrollBtn>
            </HScrollMain>
          </SheetTabs>
        </LeftCol>
        <PanelBlock />
      </Main>

      <ArrowSvg viewBox="0 0 1439 823">
        <path d="M258 307L1240 381.500" stroke="#ee1c25" strokeWidth="3.500" fill="none" />
        <path d="M1254 382.500L1235 375V394z" fill="#ee1c25" />
      </ArrowSvg>
      <Progress>39<small>%</small></Progress>
      <Watermark>头条 <WatermarkLatin>@Excel</WatermarkLatin><WatermarkTail>从零到一</WatermarkTail></Watermark>
    </Page>
  );
}
